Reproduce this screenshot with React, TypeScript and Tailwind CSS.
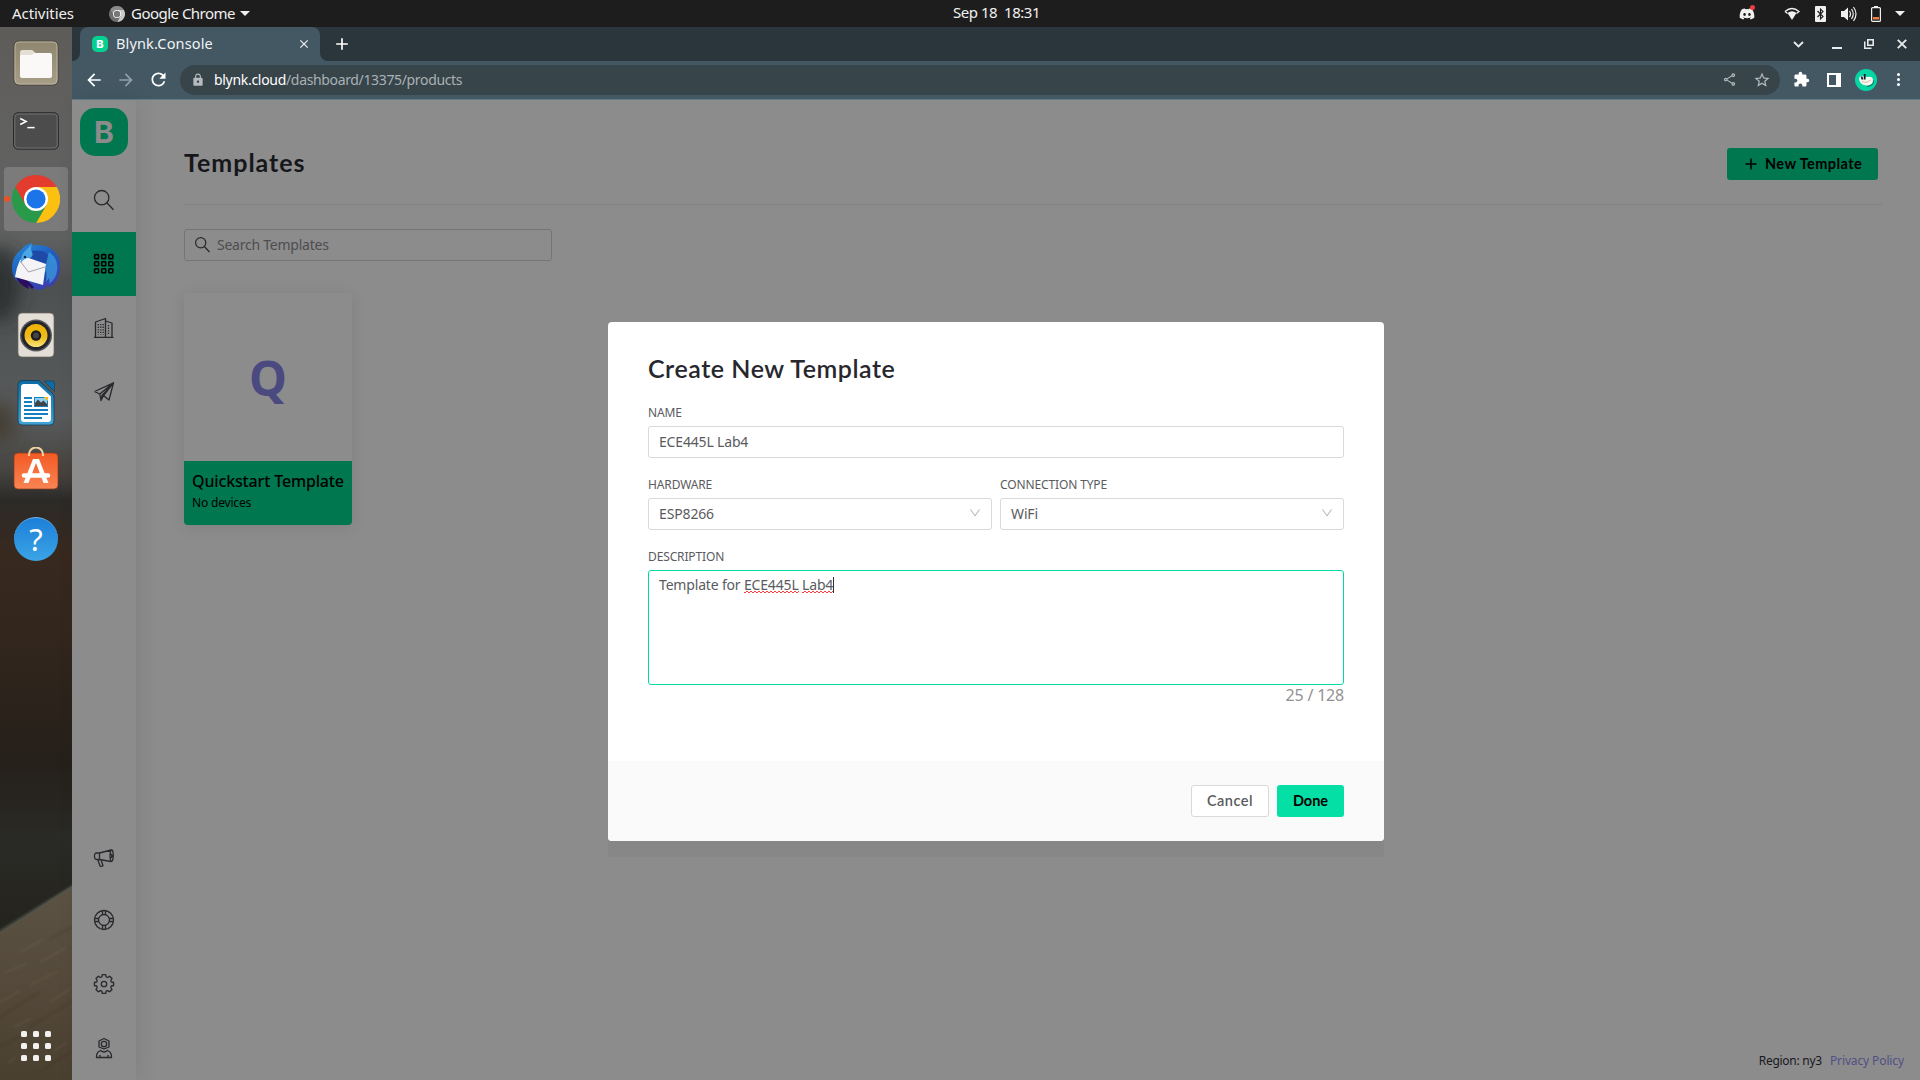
import React from 'react';
import { FaDiscord } from 'react-icons/fa';
import { MdArrowBack, MdArrowForward, MdRefresh, MdLock, MdOutlineShare, MdStarBorder, MdExtension, MdClose, MdAdd } from 'react-icons/md';

function Wallpaper() {
  return (
    <svg className="absolute inset-0 h-full w-full" viewBox="0 0 72 1053" preserveAspectRatio="none">
      <defs>
        <linearGradient id="wall" x1="0" y1="0" x2="0" y2="1">
          <stop offset="0" stopColor="#5e5c59" />
          <stop offset="0.1" stopColor="#616160" />
          <stop offset="0.2" stopColor="#5f6060" />
          <stop offset="0.24" stopColor="#4d5051" />
          <stop offset="0.3" stopColor="#525556" />
          <stop offset="0.37" stopColor="#585a5b" />
          <stop offset="0.42" stopColor="#474542" />
          <stop offset="0.45" stopColor="#2c2a28" />
          <stop offset="0.5" stopColor="#38291f" />
          <stop offset="0.58" stopColor="#32261d" />
          <stop offset="0.7" stopColor="#25201a" />
          <stop offset="0.77" stopColor="#2a2a26" />
          <stop offset="0.86" stopColor="#24231e" />
        </linearGradient>
        <linearGradient id="wood" x1="0" y1="0" x2="0" y2="1">
          <stop offset="0" stopColor="#5c5344" />
          <stop offset="0.5" stopColor="#54493a" />
          <stop offset="1" stopColor="#4a4030" />
        </linearGradient>
        <filter id="soft" x="-50%" y="-50%" width="200%" height="200%"><feGaussianBlur stdDeviation="9" /></filter>
        <filter id="softer"><feGaussianBlur stdDeviation="1" /></filter>
      </defs>
      <rect width="72" height="1053" fill="url(#wall)" />
      <ellipse cx="0" cy="258" rx="20" ry="38" fill="#262a2b" opacity="0.8" filter="url(#soft)" />
      <ellipse cx="0" cy="395" rx="16" ry="20" fill="#3c3625" opacity="0.7" filter="url(#soft)" />
      <ellipse cx="66" cy="445" rx="20" ry="12" fill="#4a4038" opacity="0.6" filter="url(#soft)" />
      <path d="M0 905 72 859V1053H0Z" fill="url(#wood)" />
      <path d="M-2 905.500 74 858" stroke="#50574d" strokeWidth="2" filter="url(#softer)" />
      <g fill="none" stroke="#75695a" strokeWidth="1.500" opacity="0.35" filter="url(#softer)">
        <path d="M20 925 44 912M40 935 66 921M4 946 26 937M30 958 58 944M50 975 70 962M0 975 20 964M14 1000 30 992M54 1024 66 1016M8 1036 16 1030" />
      </g>
      <g fill="none" stroke="#3d3325" strokeWidth="1.500" opacity="0.35" filter="url(#softer)">
        <path d="M0 990 40 965M30 1000 72 974M0 1020 30 1004M40 1045 72 1024M50 912 72 900" />
      </g>
    </svg>
  );
}

const FilesIcon = () => (
  <svg width="48" height="48" viewBox="0 0 48 48">
    <defs><linearGradient id="fi" x1="0" y1="0" x2="0" y2="1"><stop offset="0" stopColor="#8f8670" /><stop offset="1" stopColor="#a79e88" /></linearGradient></defs>
    <rect x="2" y="2" width="44" height="44" rx="5" fill="url(#fi)" stroke="#4b473f" />
    <rect x="3" y="3" width="42" height="42" rx="4" fill="none" stroke="#c3bca9" strokeOpacity="0.8" />
    <path d="M8 13.500A2.500 2.500 0 0 1 10.500 11h9q1 0 2 1l3 3v5H8Z" fill="#e3dfd5" />
    <path d="M8 17.500q0-1.500 1.500-1.500h9.500q1 0 2-1l.8-.5q1-.6 2-.6H38q2 0 2 2V37q0 2-2 2H10q-2 0-2-2Z" fill="#faf9f8" />
  </svg>
);
const TerminalIcon = () => (
  <svg width="48" height="48" viewBox="0 0 48 48">
    <rect x="1.500" y="5.700" width="45" height="36.500" rx="4.500" fill="#4c4c4c" stroke="#2c2c2c" />
    <rect x="2.800" y="7" width="42.400" height="34" rx="3.500" fill="none" stroke="#6f6f6f" />
    <path d="M8.200 11.500l6 3-6 3" fill="none" stroke="#fff" strokeWidth="1.500" />
    <path d="M15.300 20.600h7.400" stroke="#fff" strokeWidth="1.500" />
  </svg>
);
const ChromeIcon = ({ size = 48, mono = false }: { size?: number; mono?: boolean }) => (
  <svg width={size} height={size} viewBox="0 0 48 48">
    <path d="M3.200 12A24 24 0 0 1 44.800 12H24L13.600 30Z" fill={mono ? '#8b8b8b' : '#e33b2e'} />
    <path d="M44.800 12A24 24 0 0 1 24 48L34.400 30 24 12Z" fill={mono ? '#c9c9c9' : '#fcc010'} />
    <path d="M24 48A24 24 0 0 1 3.200 12L13.600 30H34.400Z" fill={mono ? '#6e6e6e' : '#29994a'} />
    <circle cx="24" cy="24" r="12" fill="#fff" />
    <circle cx="24" cy="24" r="9.600" fill={mono ? '#777' : '#1b74e8'} />
  </svg>
);
const ThunderbirdIcon = () => (
  <svg width="48" height="48" viewBox="0 0 48 48">
    <defs><linearGradient id="tb" x1="0" y1="0" x2="0.6" y2="1"><stop offset="0" stopColor="#2a8fdc" /><stop offset="0.5" stopColor="#1f5fc0" /><stop offset="1" stopColor="#3a3fae" /></linearGradient></defs>
    <path d="M0 26Q0 13 9 7q4-6 12-7l-1 2.500Q34 0 42 8t6 18q-1 12-10 18l-3-1-4 4-3-1-3 1L6 39Q0 33 0 26Z" fill="url(#tb)" />
    <path d="M4 35q5 8 13 11l-1-4 4 4 2-2-8-8Z" fill="#2b0f5e" />
    <path d="M9 18Q14 5 30 8q8 2 7 12l-5 20L5 34Q2 27 9 18Z" fill="#1d4aa6" />
    <path d="M8 17 14 14 34 21 31 42 3 34Q4 25 8 17Z" fill="#f4f4f6" />
    <path d="M8 18 16.500 29 33 24" fill="none" stroke="#9a9aa2" strokeWidth="0.900" />
    <path d="M9 20q-1-7 4-12t7-7q-2 5 0 8 2 5-3 6-5 0-8 5Z" fill="#49a7e6" />
    <circle cx="13" cy="14" r="1.300" fill="#12294f" />
    <path d="M37 9q10 7 8 19-1 8-8 13 1-3 0-6l-3 4q1-6 0-11l-1 2q1-12 4-21Z" fill="#3b9fe0" opacity="0.7" />
  </svg>
);
const RhythmboxIcon = () => (
  <svg width="48" height="48" viewBox="0 0 48 48">
    <defs><linearGradient id="rb" x1="0" y1="0" x2="0" y2="1"><stop offset="0" stopColor="#eeb405" /><stop offset="0.55" stopColor="#efba18" /><stop offset="1" stopColor="#fae37a" /></linearGradient></defs>
    <rect x="6" y="2" width="36" height="44" rx="4" fill="#e4dfd6" stroke="#6b675f" strokeWidth="0.700" />
    <circle cx="24" cy="24.500" r="16" fill="#58585c" />
    <circle cx="24" cy="24.500" r="14.500" fill="#24242c" />
    <circle cx="24" cy="24.500" r="11.500" fill="url(#rb)" />
    <circle cx="24" cy="24.500" r="5.200" fill="#1c1c1c" />
    <circle cx="24" cy="24.500" r="3" fill="#444" />
  </svg>
);
const WriterIcon = () => (
  <svg width="48" height="48" viewBox="0 0 48 48">
    <defs><linearGradient id="wr" x1="0" y1="0" x2="0" y2="1"><stop offset="0" stopColor="#0e6ba4" /><stop offset="1" stopColor="#43a5d6" /></linearGradient></defs>
    <path d="M10 1.500H27L42 16v26q0 4-4 4H10q-4 0-4-4V5.500q0-4 4-4Z" fill="url(#wr)" stroke="#123c57" strokeWidth="0.800" />
    <path d="M32 2h8.500q2 0 2 2v8.500Z" fill="#0e6ba4" stroke="#123c57" strokeWidth="0.600" />
    <path d="M12 5H25.500L39 17.500V40q0 3-3 3H12q-3 0-3-3V8q0-3 3-3Z" fill="#fff" />
    <path d="M12 19h8M12 23h8M12 27h8M12 31h24M12 35h24M12 39h18" stroke="#1480bf" strokeWidth="2" />
    <rect x="22" y="18" width="14" height="10" fill="#1480bf" />
    <rect x="23" y="19" width="12" height="8" fill="#8fd1f3" />
    <path d="M23 27v-3l3-3.500 3 3 2.500-2L35 25v2Z" fill="#444" />
    <path d="M31.500 18H36v4Z" fill="#f9b915" />
  </svg>
);
const SoftwareIcon = () => (
  <svg width="48" height="48" viewBox="0 0 48 48">
    <defs><linearGradient id="sw" x1="0" y1="0" x2="0" y2="1"><stop offset="0" stopColor="#f35a24" /><stop offset="1" stopColor="#f98453" /></linearGradient></defs>
    <rect x="2" y="6" width="44" height="36" rx="4" fill="url(#sw)" stroke="#8a3a1a" strokeWidth="0.700" />
    <path d="M17 9V7.500a7 7 0 0 1 14 0V9" fill="none" stroke="#f1d3a0" strokeWidth="2" />
    <path d="M21 12h6l9.500 24h-5l-7.500-20-7.500 20h-5Z" fill="#fff" />
    <path d="M12 28.500H36" stroke="#fff" strokeWidth="4.500" strokeLinecap="round" />
  </svg>
);

const HelpIcon = () => (
  <div className="flex size-[44px] items-center justify-center rounded-full border-t border-[#6db8f0] bg-linear-to-b from-[#1c7fd8] to-[#3ba4e6] text-[31px] leading-none text-white">?</div>
);

function Dock() {
  const icons = [FilesIcon, TerminalIcon, ChromeIcon, ThunderbirdIcon, RhythmboxIcon, WriterIcon, SoftwareIcon, HelpIcon];
  return (
    <aside className="relative flex w-[72px] shrink-0 flex-col justify-between overflow-hidden">
      <Wallpaper />
      <div className="relative flex flex-col gap-1 pt-1">
        {icons.map((Icon, i) => (
          <div key={i} className={i === 2 ? 'relative mx-1 flex h-16 items-center justify-center rounded bg-white/17' : 'relative mx-1 flex h-16 items-center justify-center'}>
            {i === 2 && <span className="absolute top-[29px] left-0 size-[6px] rounded-full bg-[#e95420]" />}
            <Icon />
          </div>
        ))}
      </div>
      <div className="relative mb-[19px] ml-[21px] grid w-[30px] grid-cols-3 gap-[6px]">
        {Array.from({ length: 9 }, (_, i) => <span key={i} className="size-[6px] rounded-[1.500px] bg-[#f2f1f0]" />)}
      </div>
    </aside>
  );
}

function TopBar() {
  return (
    <header className="relative flex h-[27px] items-center bg-[#1d1d1d] text-[15px] text-[#f0f0f0]">
      <span className="ml-3 w-[97px] leading-none tracking-[-0.05px]">Activities</span>
      <ChromeIcon size={16} mono />
      <span className="ml-[6px] leading-none tracking-[-0.52px]">Google Chrome</span>
      <span className="ml-[5px] border-x-[5px] border-t-[5px] border-x-transparent border-t-[#f0f0f0]" />
      <span className="absolute top-[5px] left-[953px] leading-none tracking-[-0.47px] whitespace-pre">Sep 18  18:31</span>
      <div className="absolute top-0 right-0 flex h-[27px] items-center">
        <span className="relative mr-[29px]">
          <FaDiscord size={16} />
          <span className="absolute -top-[1px] right-0 size-[5px] rounded-full bg-[#ee3d3d]" />
        </span>
        <svg width="16" height="14" viewBox="0 0 16 14" className="mr-[15px]">
          <path d="M3.500 6Q8 2.500 12.500 6L8 13Z" fill="#f0f0f0" />
          <path d="M1 4.500Q8-1.500 15 4.500L12.500 6.500" fill="none" stroke="#f0f0f0" strokeWidth="1.300" />
          <path d="M1 4.500 3.500 6.500" stroke="#f0f0f0" strokeWidth="1.300" />
        </svg>
        <svg width="11" height="16" viewBox="0 0 11 16" className="mr-[15px]">
          <rect width="11" height="16" rx="1" fill="#f0f0f0" />
          <path d="M2.500 5 8 10.500 5.500 13V3L8 5.500 2.500 11" fill="none" stroke="#1d1d1d" strokeWidth="1.100" />
        </svg>
        <svg width="16" height="16" viewBox="0 0 16 16" className="mr-[14px]">
          <path d="M0 5H3L7 1.500V14.500L3 11H0Z" fill="#f0f0f0" />
          <path d="M8.500 5q2 3 0 6M10.500 3q3.500 5 0 10M12.500 1q5 7 0 14" fill="none" stroke="#f0f0f0" strokeWidth="1.200" />
        </svg>
        <svg width="10" height="16" viewBox="0 0 10 16" className="mr-[14px]">
          <rect x="0.600" y="1.600" width="8.800" height="13.800" rx="1" fill="none" stroke="#f0f0f0" strokeWidth="1.200" />
          <path d="M3 0.700H7" stroke="#f0f0f0" strokeWidth="1.400" />
          <rect x="2" y="11" width="6" height="2.500" fill="#f47b3c" />
        </svg>
        <span className="mr-[15px] border-x-[5px] border-t-[5px] border-x-transparent border-t-[#f0f0f0]" />
      </div>
    </header>
  );
}

function BrowserChrome() {
  return (
    <div className="shrink-0">
      <div className="flex h-[34px] items-stretch justify-between bg-[#2a363b]">
        <div className="flex">
          <div className="w-2 bg-[#435863]"><div className="h-full rounded-br-lg bg-[#2a363b]" /></div>
          <div className="flex w-[240px] items-center rounded-t-lg bg-[#435863] pr-[9px] pl-3 text-[14px] text-[#f1f3f4]">
            <span className="flex size-4 items-center justify-center rounded-[5px] bg-[#04d092] font-['Inter'] text-[11px] leading-none font-extrabold text-white">B</span>
            <span className="ml-2 grow text-[14.500px] tracking-[0.15px]">Blynk.Console</span>
            <MdClose size={14} />
          </div>
          <div className="w-2 bg-[#435863]"><div className="h-full rounded-bl-lg bg-[#2a363b]" /></div>
          <MdAdd size={20} className="mt-[7px] ml-1 text-white" />
        </div>
        <div className="flex items-center text-[#e8eaed]">
          <svg width="11" height="7" viewBox="0 0 11 7" className="mr-[28px]"><path d="M1 1 5.500 5.500 10 1" fill="none" stroke="currentColor" strokeWidth="1.800" /></svg>
          <span className="mt-[8px] mr-[22px] h-[2px] w-[10px] bg-current" />
          <svg width="10" height="10" viewBox="0 0 10 10" className="mr-[23px]"><path d="M3.800 0.800H9.200V6.200H3.800ZM0.700 2.500V9.300H7.500" fill="none" stroke="currentColor" strokeWidth="1.600" /></svg>
          <svg width="10" height="10" viewBox="0 0 10 10" className="mr-[13px]"><path d="M.8.800 9.200 9.200M9.200.800.800 9.200" stroke="currentColor" strokeWidth="1.900" /></svg>
        </div>
      </div>
      <div className="flex h-[39px] items-center border-b border-[#637c89] bg-[#435863] pr-[18px] pb-px pl-[12px] text-white">
        <MdArrowBack size={20} />
        <MdArrowForward size={20} className="ml-3 text-[#93a0a7]" />
        <MdRefresh size={21} className="ml-[12px]" />
        <div className="ml-[11px] flex h-[30px] w-[1600px] items-center rounded-full bg-[#37444a] pr-[9px] pl-[11px] text-[14px]">
          <MdLock size={14} className="text-[#b4babd]" />
          <span className="ml-[9px] tracking-[-0.3px]">blynk.cloud</span>
          <span className="grow tracking-[-0.35px] text-[#a9b1b5]">/dashboard/13375/products</span>
          <MdOutlineShare size={15} className="text-[#b4babd]" />
          <MdStarBorder size={18} className="ml-4 text-[#b4babd]" />
        </div>
        <MdExtension size={17} className="ml-[13px]" />
        <svg width="14" height="14" viewBox="0 0 14 14" className="ml-[17px]"><path d="M0 0H14V14H0ZM2 2V12H9V2Z" fill="#fff" fillRule="evenodd" /></svg>
        <svg width="22" height="22" viewBox="0 0 22 22" className="ml-[14px]">
          <circle cx="11" cy="11" r="11" fill="#04d6a3" />
          <path d="M12 17.500q6.500-1 6.500-6" fill="none" stroke="#0c6e60" strokeWidth="1.200" />
          <path d="M4 9Q6 5.500 9 7.500l4 .5q5-1 5 3.500 0 5-7 5-7-1-7-7.500Z" fill="#f2f8ec" />
          <path d="M6.500 7.500l1 3M9.700 5v5.500" stroke="#0d1930" strokeWidth="1.800" />
          <path d="M7 12.500l4 1 5-2.500" fill="none" stroke="#efb4b4" strokeWidth="1" />
        </svg>
        <div className="ml-[20px] flex flex-col gap-[2px]"><i className="size-[3px] rounded-full bg-white" /><i className="size-[3px] rounded-full bg-white" /><i className="size-[3px] rounded-full bg-white" /></div>
      </div>
    </div>
  );
}

const navTop = [
  <g key="s"><circle cx="7.700" cy="7.700" r="7.200" /><path d="M12.800 12.800 19.500 19.700" /></g>,
  <g key="g" strokeWidth="1.600">{[2.600, 9.700, 16.800].map(y => [2.600, 9.700, 16.800].map(x => <rect key={x + '-' + y} x={x - 2} y={y - 2} width="4" height="4" rx="0.700" />))}</g>,
  <g key="b"><path d="M1.500 19V4L11.500.500V19M11.500 3l6.500 2V19M0 19.300H19.500" /><path d="M4.300 6v11M6.800 6v11M9.200 6v11M14.500 7v10" strokeDasharray="1.300 1.300" /></g>,
  <g key="p"><path d="M.5 9.500 19.500.800 15 18 9.500 13.500M.5 9.500 5.800 12 19.500.800 8 13.500 7 18.500 5.800 12M9.500 13.500 7 18.500M9.500 13.500 19.500.800" /></g>,
];
const navBottom = [
  <g key="m" transform="translate(0 2)"><path d="M5.500 5 17 2q2-1.500 2.300 5.500-.3 6.500-2.300 6L5.500 11.500M5.500 5v6.500H2.500Q.5 11.500.5 8.200T2.500 5ZM3.800 11.500 6 18q2 1 3-.3L7 11.800M17 2q-2 6 0 11.500M17 6q2 2 0 4" /></g>,
  <g key="l"><circle cx="10" cy="10" r="9.500" /><circle cx="10" cy="10" r="5.500" /><path d="M8.500.700V5M11.500.700V5M8.500 15v4.300M11.500 15v4.300M.7 8.500H5M.7 11.500H5M15 8.500h4.300M15 11.500h4.300" /></g>,
  <g key="c"><circle cx="10" cy="10" r="2.700" /><path d="M8.300.600h3.400l.5 2.300 1.500.600 2-1.300 2.300 2.300-1.200 2 .6 1.500 2.200.5v3l-2.200.5-.6 1.500 1.200 2-2.300 2.300-2-1.200-1.500.6-.5 2.200H8.300l-.5-2.200-1.500-.6-2 1.200L2 15.500l1.200-2-.6-1.500-2.200-.5v-3l2.200-.5.600-1.500L2 4.500l2.300-2.300 2 1.300 1.500-.6Z" /></g>,
  <g key="u"><path d="M10 .500 15 3v6L10 11 5 9V3Z" /><circle cx="10" cy="6" r="2.700" /><path d="M2.500 19.500q-.5-5 4-7 3.500 3 7 0 4.500 2 4 7ZM6 17v2.500M14 17v2.500" /></g>,
];

function NavItem({ children, active }: { children: React.ReactNode; active?: boolean }) {
  return (
    <div className={active ? 'flex h-16 items-center justify-center bg-[#00774f] text-black' : 'flex h-16 items-center justify-center text-[#28292c]'}>
      <svg width="20" height="20" viewBox="0 0 20 20" className="overflow-visible" fill="none" stroke="currentColor" strokeWidth="1.300" strokeLinejoin="round">{children}</svg>
    </div>
  );
}

function Sidebar() {
  return (
    <nav className="relative flex w-16 shrink-0 flex-col justify-between bg-[#8c8c8c] shadow-[4px_0_20px_rgba(0,0,0,0.08)]">
      <div>
        <div className="flex h-[68px] items-start justify-center pt-2">
          <span className="flex size-12 items-center justify-center rounded-[15px] bg-[#00774f] font-['Inter'] text-[30px] leading-none font-bold text-[#8c8c8c]">B</span>
        </div>
        {navTop.map((icon, i) => <NavItem key={i} active={i === 1}>{icon}</NavItem>)}
      </div>
      <div>{navBottom.map((icon, i) => <NavItem key={i}>{icon}</NavItem>)}</div>
    </nav>
  );
}

function Templates() {
  return (
    <main className="flex grow flex-col bg-[#8c8c8c] pr-[38px] pl-12">
      <div className="flex h-[105px] items-center justify-between border-b border-[#828282] pt-[23px] pr-1">
        <h1 className="-mt-[3px] font-['Lato'] text-[25px] leading-8 font-bold tracking-[0.98px] text-[#16171b]">Templates</h1>
        <button className="flex h-8 w-[151px] items-center rounded-[3px] bg-[#00774f] pl-[18px] font-['Lato'] text-[14.500px] font-bold tracking-[0.42px] text-black">
          <svg width="12" height="12" viewBox="0 0 12 12" className="mr-[8px]"><path d="M6 .5V11.500M.5 6H11.500" stroke="#000" strokeWidth="1.500" /></svg>
          New Template
        </button>
      </div>
      <div className="mt-6 flex h-8 w-[368px] items-center rounded-[3px] border border-[#757575] pb-[2px] pl-[10px] text-[14px] tracking-[-0.24px] text-[#4c4d50]">
        <svg width="15" height="15" viewBox="0 0 15 15" className="mr-[7px] overflow-visible" fill="none" stroke="#28292c" strokeWidth="1.200"><circle cx="5.700" cy="5.700" r="5.100" /><path d="M9.300 9.500 14.500 15" /></svg>
        Search Templates
      </div>
      <article className="mt-8 h-[232px] w-[168px] overflow-hidden rounded-[4px] shadow-[0_2px_16px_rgba(0,0,0,0.09)]">
        <div className="flex h-[168px] items-center justify-center pt-[2px] font-['Noto_Sans'] text-[48px] leading-none font-bold text-[#4b4a80]">Q</div>
        <div className="h-16 bg-[#00774f] px-2 pt-[9px] text-black">
          <p className="text-[16px] leading-[22px] font-medium tracking-[-0.15px] whitespace-nowrap">Quickstart Template</p>
          <p className="text-[12px] leading-[22px] tracking-[-0.18px]">No devices</p>
        </div>
      </article>
      <footer className="-mr-[22px] mt-auto flex justify-end gap-2 pb-[10px] text-[12px] leading-[18px]">
        <span className="tracking-[-0.26px] text-[#18191c]">Region: ny3</span>
        <a className="tracking-[-0.12px] text-[#514f86]">Privacy Policy</a>
      </footer>
    </main>
  );
}

const Label = ({ children }: { children: React.ReactNode }) => (
  <p className="h-[18px] text-[12px] leading-[18px] tracking-[-0.13px] text-[#5a5b60]">{children}</p>
);

function Select({ label, value }: { label: string; value: string }) {
  return (
    <div className="flex-1">
      <Label>{label}</Label>
      <div className="mt-1 flex h-8 items-center justify-between rounded-[3px] border border-[#d9d9d9] pr-[11px] pb-[2px] pl-[10px] text-[14px] tracking-[-0.14px]">
        {value}
        <svg width="10" height="8" viewBox="0 0 10 8"><path d="M.5.500 5 6.800 9.500.500" fill="none" stroke="#bfbfbf" strokeWidth="1.200" /></svg>
      </div>
    </div>
  );
}

/* A word flagged by the spell checker, with a fine red zigzag under it. */
const Misspelled = ({ children }: { children: React.ReactNode }) => (
  <span className="relative">
    {children}
    <span className="absolute right-0 bottom-px left-0 h-[2px] bg-[conic-gradient(#ff3b3b_25%,transparent_0_50%,#ff3b3b_0_75%,transparent_0)] bg-[length:4px_2px]" />
  </span>
);

function CreateTemplateModal() {
  return (
    <div className="absolute inset-0 flex items-start justify-center pt-[222px]">
      <div className="w-[776px] shadow-[0_16px_0_rgba(0,0,0,0.035)]">
        <section className="flex h-[519px] flex-col overflow-hidden rounded-[4px] bg-white text-[#5a5b60]">
          <div className="grow px-10 pt-[30px]">
            <h2 className="h-[34px] font-['Lato'] text-[25px] leading-8 font-semibold tracking-[0.54px] text-[#27272e]">Create New Template</h2>
            <div className="mt-[18px]">
              <Label>NAME</Label>
              <div className="mt-1 flex h-8 items-center rounded-[3px] border border-[#d9d9d9] pb-[2px] pl-[10px] text-[14px] tracking-[-0.17px]">ECE445L Lab4</div>
            </div>
            <div className="mt-[18px] flex gap-2">
              <Select label="HARDWARE" value="ESP8266" />
              <Select label="CONNECTION TYPE" value="WiFi" />
            </div>
            <div className="mt-[18px]">
              <Label>DESCRIPTION</Label>
              <div className="mt-1 flex h-[115px] items-start rounded-[3px] border border-[#04dba4] pt-[3px] pl-[10px] text-[14px] leading-[22px] tracking-[-0.17px]">
                <p className="whitespace-pre">Template for <Misspelled>ECE445L</Misspelled> <Misspelled>Lab4</Misspelled></p>
                <span className="mt-[3px] h-4 w-px bg-[#333]" />
              </div>
              <p className="text-right text-[16px] leading-[20px] tracking-[-0.2px] text-[#929292]">25 / 128</p>
            </div>
          </div>
          <div className="flex h-20 items-center justify-end gap-2 bg-[#fafafa] pr-10 font-['Lato'] text-[14.500px]">
            <button className="h-8 w-[78px] rounded-[3px] border border-[#d9d9d9] bg-white font-semibold tracking-[0.5px]">Cancel</button>
            <button className="h-8 w-[67px] rounded-[3px] bg-[#04dfa5] font-bold text-black">Done</button>
          </div>
        </section>
      </div>
    </div>
  );
}

export default function App() {
  return (
    <div className="flex h-[1080px] w-[1920px] flex-col overflow-hidden bg-[#8c8c8c] font-['Noto_Sans',sans-serif]">
      <TopBar />
      <div className="flex min-h-0 grow">
        <Dock />
        <div className="flex min-w-0 grow flex-col">
          <BrowserChrome />
          <div className="relative flex min-h-0 grow">
            <div className="z-10 flex"><Sidebar /></div>
            <Templates />
            <div className="absolute inset-0 z-20"><CreateTemplateModal /></div>
          </div>
        </div>
      </div>
    </div>
  );
}
